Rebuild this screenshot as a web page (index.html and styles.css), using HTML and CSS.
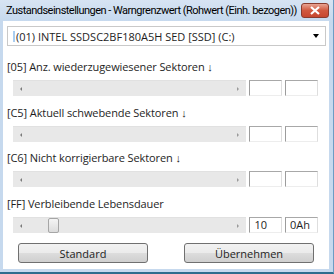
FILE: index.html
```html
<!DOCTYPE html>
<html lang="de">
<head>
    <meta charset="UTF-8">
    <meta name="viewport" content="width=device-width, initial-scale=1.0">
    <title>Zustandseinstellungen</title>
    <link rel="stylesheet" href="styles.css">
</head>
<body>
    <div class="window">
        <div class="titlebar">
            <span class="title">Zustandseinstellungen - Warngrenzwert (Rohwert (Einh. bezogen))</span>
            <span class="close">
                <svg width="12" height="9" viewBox="0 0 12 9"><path d="M2 1 L10 8 M10 1 L2 8" stroke="#fff" stroke-width="2.2" fill="none"/></svg>
            </span>
        </div>
        <div class="client">
            <div class="combo">
                <span class="caret"></span>
                <span class="combo-text">(01) INTEL SSDSC2BF180A5H SED [SSD] (C:)</span>
                <span class="combo-arrow"></span>
            </div>

            <div class="attr">
                <div class="attr-label">[05] Anz. wiederzugewiesener Sektoren ↓</div>
                <div class="attr-row">
                    <div class="scroll"><span class="arr arr-left"></span><span class="arr arr-right"></span></div>
                    <div class="edit"></div>
                    <div class="edit"></div>
                </div>
            </div>

            <div class="attr">
                <div class="attr-label">[C5] Aktuell schwebende Sektoren ↓</div>
                <div class="attr-row">
                    <div class="scroll"><span class="arr arr-left"></span><span class="arr arr-right"></span></div>
                    <div class="edit"></div>
                    <div class="edit"></div>
                </div>
            </div>

            <div class="attr attr-tight">
                <div class="attr-label">[C6] Nicht korrigierbare Sektoren ↓</div>
                <div class="attr-row">
                    <div class="scroll"><span class="arr arr-left"></span><span class="arr arr-right"></span></div>
                    <div class="edit"></div>
                    <div class="edit"></div>
                </div>
            </div>

            <div class="attr">
                <div class="attr-label">[FF] Verbleibende Lebensdauer</div>
                <div class="attr-row">
                    <div class="scroll"><span class="arr arr-left"></span><span class="thumb"></span><span class="arr arr-right"></span></div>
                    <div class="edit num">10</div>
                    <div class="edit">0Ah</div>
                </div>
            </div>

            <div class="buttons">
                <button class="btn">Standard</button>
                <button class="btn">Übernehmen</button>
            </div>
        </div>
    </div>
</body>
</html>
```

FILE: styles.css
```css
body { margin: 0; font-family: "Open Sans", "Noto Sans", sans-serif; font-size: 11px; color: #1e1e1e; }
.window { width: 333px; height: 272px; background: #c6d9ee; border-right: 1px solid #6b9cc4; border-bottom: 2px solid #2e6d8e; display: flex; flex-direction: column; }
.titlebar { height: 21px; display: flex; align-items: center; padding-left: 6px; background: linear-gradient(#d7e4f3, #c6d9ee); }
.title { font-family: Roboto, "Open Sans", sans-serif; font-size: 11px; letter-spacing: -0.52px; color: #000; white-space: nowrap; }
.close { margin-left: auto; margin-right: 4px; width: 26px; height: 13px; border: 1px solid #8a3b2e; border-radius: 3px; background: linear-gradient(#e8a393, #d0583f 50%, #c7472f); display: flex; align-items: center; justify-content: center; }
.client { flex: 1; background: #fff; margin: 0 4px 3px 3px; padding: 5px 3px 0 4px; display: flex; flex-direction: column; }

.combo { height: 18px; border: 1px solid #c9c9c9; display: flex; align-items: center; padding-left: 5px; }
.caret { width: 2px; height: 11px; background: #a9cdf0; margin-right: 1px; }
.combo-text { flex: 1; white-space: nowrap; }
.combo-arrow { width: 0; height: 0; border-left: 3px solid transparent; border-right: 3px solid transparent; border-top: 4px solid #000; margin-right: 6px; }

.attr { margin-top: 13px; }
.attr + .attr { margin-top: 9px; }
.attr + .attr-tight { margin-top: 8px; }
.attr-label { height: 15px; line-height: 15px; white-space: nowrap; letter-spacing: -0.1px; }
.attr-row { display: flex; gap: 3px; margin: 6px 0 0 6px; height: 16px; }
.scroll { width: 233px; background: #e8e8e8; border-top: 1px solid #e1e1e1; box-sizing: border-box; display: flex; align-items: center; padding: 0 7px; }
.arr { width: 0; height: 0; border-top: 2px solid transparent; border-bottom: 2px solid transparent; }
.arr-left { border-right: 2px solid #7a7a7a; }
.arr-right { border-left: 2px solid #9a9a9a; margin-left: auto; }
.thumb { width: 11px; height: 15px; margin-left: 26px; border: 1px solid #a6a6a6; border-radius: 2px; background: linear-gradient(#f4f4f4, #dcdcdc); box-sizing: border-box; }
.edit { width: 33px; box-sizing: border-box; border: 1px solid; border-color: #a8a8a8 #dedede #ededed #9c9c9c; line-height: 14px; padding-left: 4px; }
.edit.num { text-align: right; padding: 0 14px 0 0; }

.buttons { display: flex; gap: 36px; margin: 10px 0 0 11px; }
.btn { width: 130px; height: 20px; padding: 0; font-family: inherit; font-size: 11px; color: #1e1e1e; border: 1px solid #707070; border-radius: 3px; background: linear-gradient(#f2f2f2, #ebebeb 50%, #dddddd 51%, #cfcfcf); }
```
